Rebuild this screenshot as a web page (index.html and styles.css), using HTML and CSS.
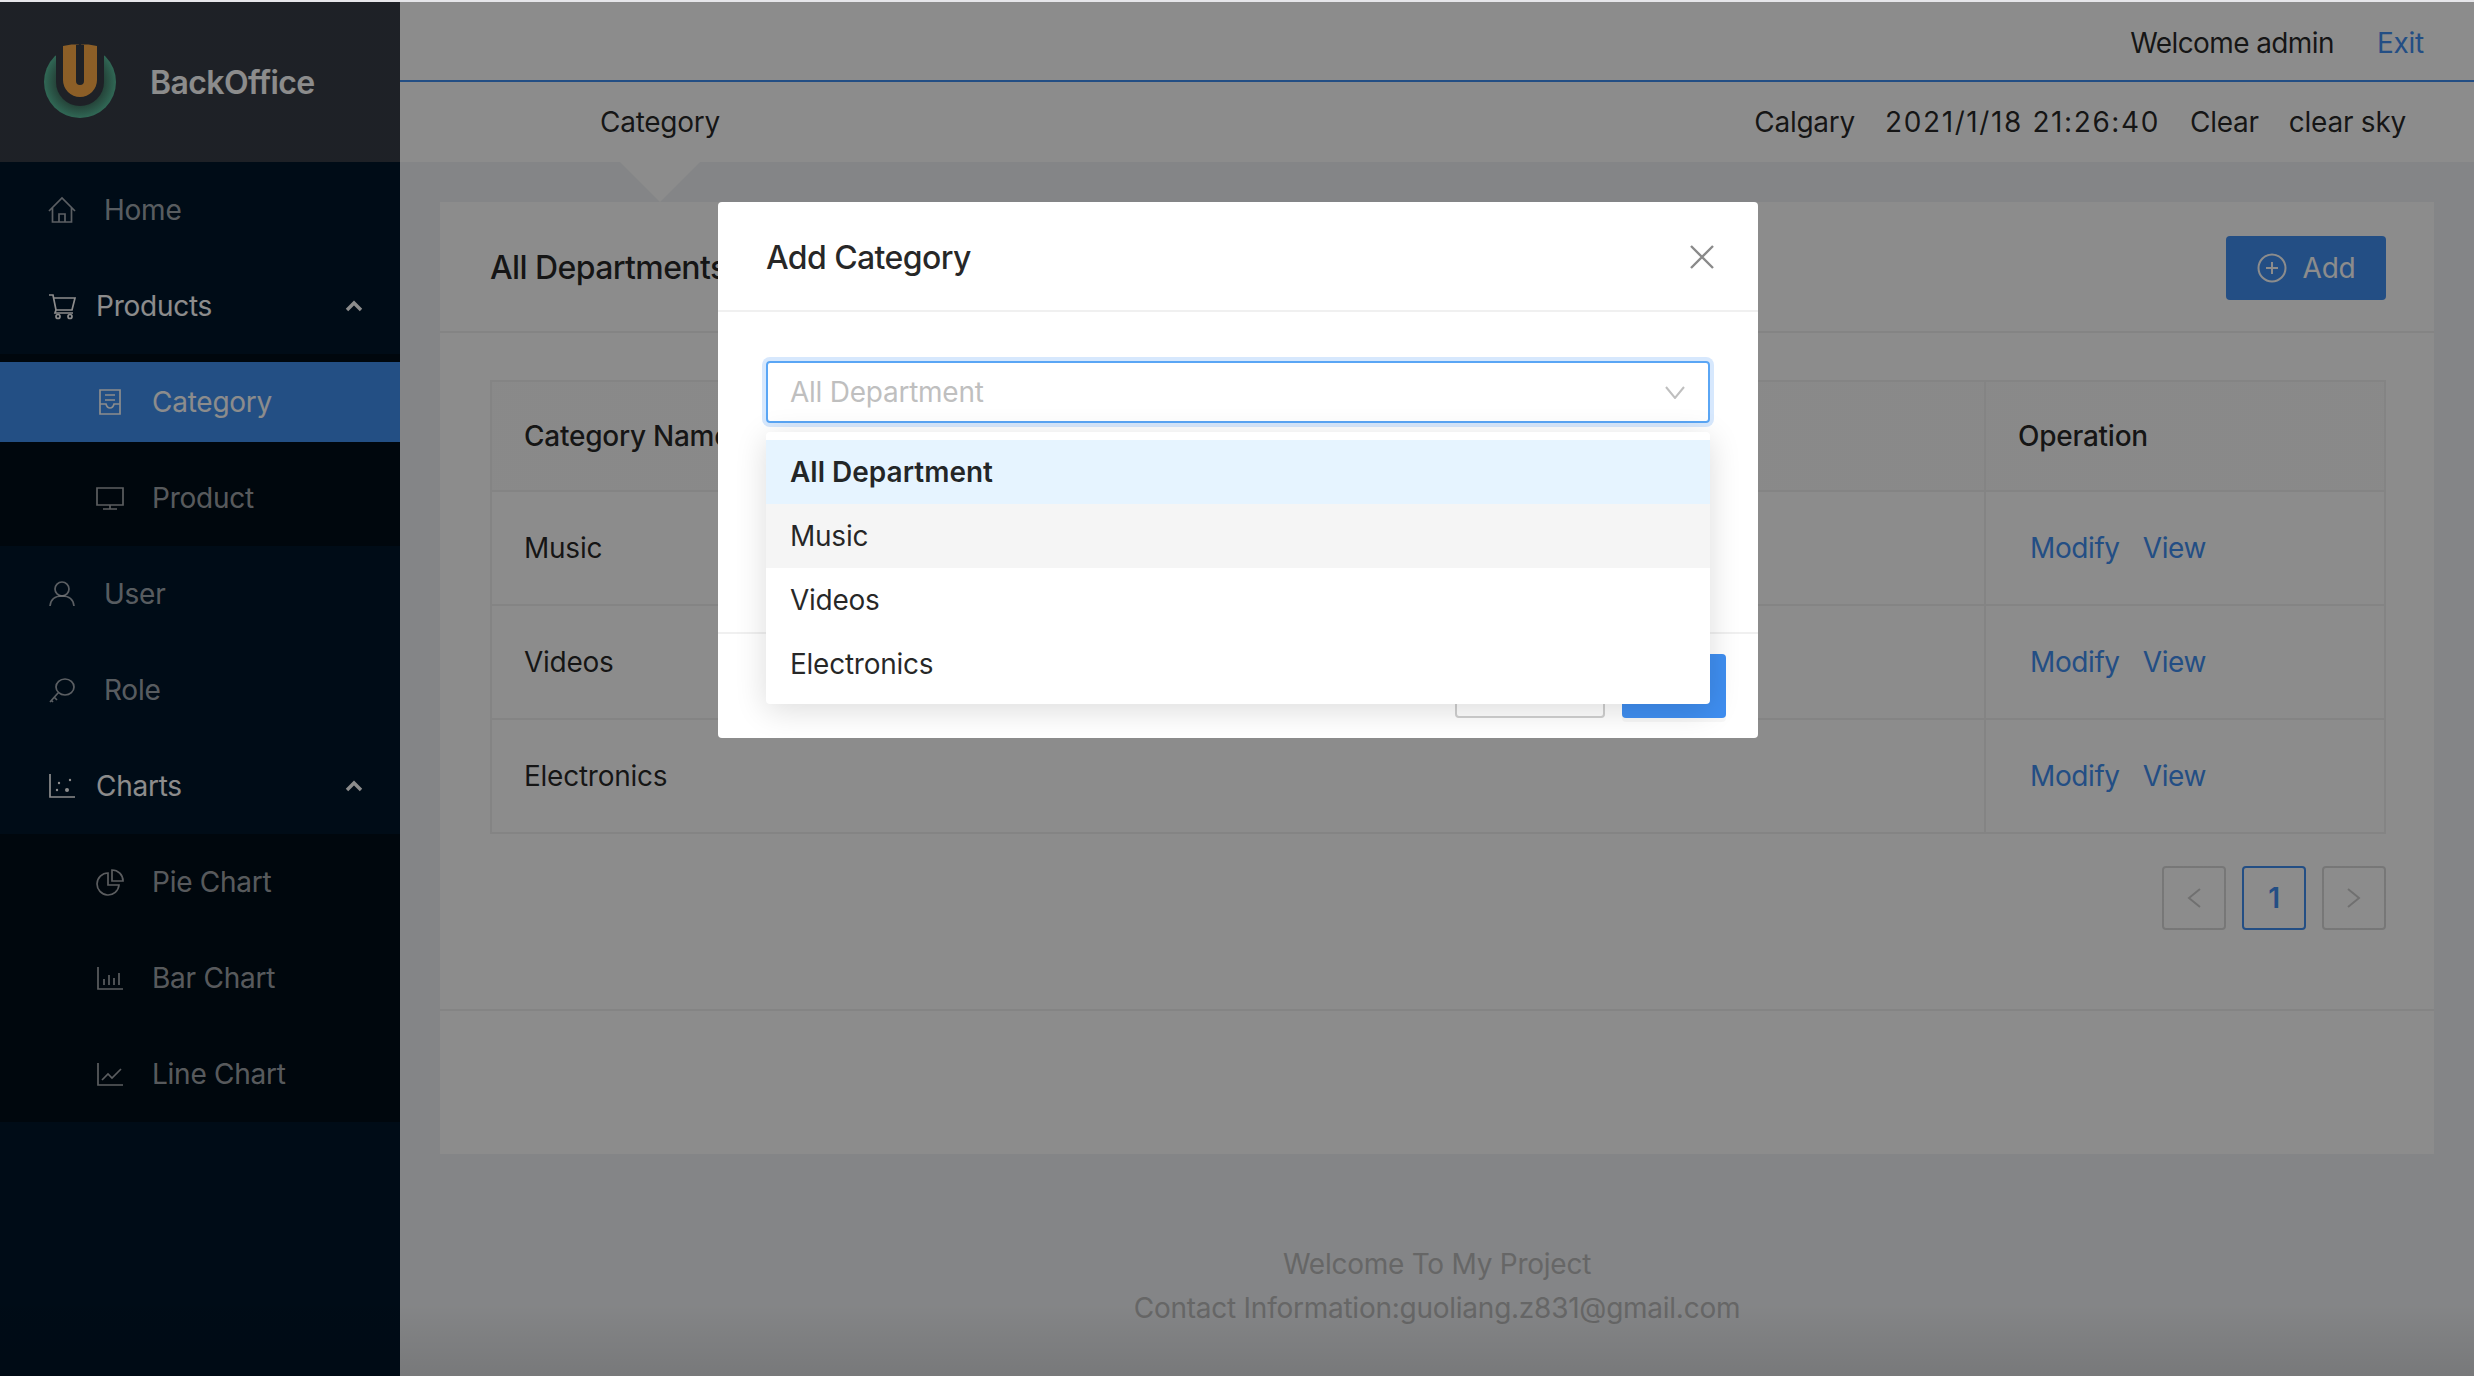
FILE: index.html
```html
<!DOCTYPE html>
<html>
<head>
  <title>BackOffice</title>
  <link rel="stylesheet" href="styles.css">
</head>
<body>
  <div class="page">
    <div class="sidebar">
      <div class="logo">
        <svg class="logo-mark" width="72" height="72" viewBox="0 0 72 72">
          <defs>
            <radialGradient id="ring" cx="50%" cy="50%" r="50%">
              <stop offset="60%" stop-color="#3f6f5f"/>
              <stop offset="100%" stop-color="#58bd9b"/>
            </radialGradient>
          </defs>
          <circle cx="36" cy="36" r="36" fill="url(#ring)"/>
          <path d="M12 -4H60V36A24 24 0 0 1 12 36Z" fill="#363c46"/>
          <path d="M19 0Q36 -4 53 0V34A17 17 0 0 1 19 34ZM32 -2V35A4 4 0 0 0 40 35V-2Z" fill="#ffac47" fill-rule="evenodd"/>
        </svg>
        <span class="logo-title">BackOffice</span>
      </div>
      <div class="menu">
        <div class="item">
          <svg class="ico" viewBox="0 0 28 28"><path d="M1 15 14 2l13 13M4.500 12v14h19V12M11 26v-8h6v8"/></svg>
          <span class="label">Home</span>
        </div>
        <div class="item open">
          <svg class="ico" viewBox="0 0 28 28"><path d="M1 3h4l3 15h16l3-12H6M8 18l-1 3h18"/><circle cx="10" cy="24.500" r="2"/><circle cx="22" cy="24.500" r="2"/></svg>
          <span class="label tight">Products</span>
          <svg class="chev" viewBox="0 0 18 12"><path d="M2 10 9 3l7 7"/></svg>
        </div>
        <div class="sub">
          <div class="item selected">
            <svg class="ico" viewBox="0 0 28 28"><path d="M4 2h20v24H4zM9 7h10M9 12h10M4 16h6q1 4 4 4t4-4h6"/></svg>
            <span class="label">Category</span>
          </div>
          <div class="item">
            <svg class="ico" viewBox="0 0 28 28"><path d="M1 4h26v17H1zM14 21v4M7 25h14"/></svg>
            <span class="label">Product</span>
          </div>
        </div>
        <div class="item">
          <svg class="ico" viewBox="0 0 28 28"><circle cx="14" cy="9" r="7"/><path d="M2 26q1-10 12-10t12 10"/></svg>
          <span class="label">User</span>
        </div>
        <div class="item">
          <svg class="ico" viewBox="0 0 28 28"><ellipse cx="17" cy="11" rx="9" ry="8"/><path d="M10 17 2 26M6 21l3 3M3 24l2 2"/></svg>
          <span class="label">Role</span>
        </div>
        <div class="item open">
          <svg class="ico" viewBox="0 0 28 28"><path d="M2 2v23h25"/><circle cx="9" cy="18" r="1.200" class="dot"/><circle cx="11" cy="11" r="1.200" class="dot"/><circle cx="19" cy="18" r="2" class="dot"/><circle cx="22" cy="8" r="1.200" class="dot"/></svg>
          <span class="label tight">Charts</span>
          <svg class="chev" viewBox="0 0 18 12"><path d="M2 10 9 3l7 7"/></svg>
        </div>
        <div class="sub">
          <div class="item">
            <svg class="ico" viewBox="0 0 28 28"><path d="M12 5a11 11 0 1 0 11 12H12zM16 2v11h11A11 11 0 0 0 16 2z"/></svg>
            <span class="label">Pie Chart</span>
          </div>
          <div class="item">
            <svg class="ico" viewBox="0 0 28 28"><path d="M2 3v22h25M8 21v-6M13 21V11M18 21v-7M23 21V9"/></svg>
            <span class="label">Bar Chart</span>
          </div>
          <div class="item">
            <svg class="ico" viewBox="0 0 28 28"><path d="M2 3v22h25M6 20l6-6 4 4 9-9"/></svg>
            <span class="label">Line Chart</span>
          </div>
        </div>
      </div>
    </div>

    <div class="main">
      <div class="header">
        <div class="header-top">
          <span class="welcome">Welcome admin</span>
          <a class="link">Exit</a>
        </div>
        <div class="header-bottom">
          <div class="page-title">Category</div>
          <div class="weather">
            <span>Calgary</span>
            <span class="date">2021/1/18 21:26:40</span>
            <span>Clear</span>
            <span>clear sky</span>
          </div>
        </div>
      </div>

      <div class="content">
        <div class="card">
          <div class="card-head">
            <span class="card-title">All Departments</span>
            <button class="add-button">
              <svg width="30" height="30" viewBox="0 0 30 30"><circle cx="15" cy="15" r="13.500"/><path d="M15 9v12M9 15h12"/></svg>
              Add
            </button>
          </div>
          <div class="card-body">
            <table class="table">
              <tr>
                <th>Category Name</th>
                <th class="op-col">Operation</th>
              </tr>
              <tr>
                <td>Music</td>
                <td class="op-col"><a class="link op">Modify</a><a class="link op">View</a></td>
              </tr>
              <tr>
                <td>Videos</td>
                <td class="op-col"><a class="link op">Modify</a><a class="link op">View</a></td>
              </tr>
              <tr>
                <td>Electronics</td>
                <td class="op-col"><a class="link op">Modify</a><a class="link op">View</a></td>
              </tr>
            </table>
            <div class="pager">
              <div class="pager-item"><svg width="16" height="22" viewBox="0 0 16 22"><path d="M14 2 3 11l11 9"/></svg></div>
              <div class="pager-item active">1</div>
              <div class="pager-item"><svg width="16" height="22" viewBox="0 0 16 22"><path d="M2 2l11 9-11 9"/></svg></div>
            </div>
          </div>
        </div>
      </div>

      <div class="footer">
        <div>Welcome To My Project</div>
        <div>Contact Information:guoliang.z831@gmail.com</div>
      </div>
    </div>

    <div class="mask"></div>

    <div class="modal">
      <div class="modal-head">
        <span class="modal-title">Add Category</span>
        <svg class="modal-close" width="24" height="24" viewBox="0 0 24 24"><path d="M1 1l22 22M23 1 1 23"/></svg>
      </div>
      <div class="modal-body">
        <div class="select">
          <span class="placeholder">All Department</span>
          <svg class="select-arrow" width="20" height="13" viewBox="0 0 20 13"><path d="M1 1l9 11 9-11"/></svg>
        </div>
      </div>
      <div class="modal-foot">
        <button class="btn">Cancel</button>
        <button class="btn btn-primary">OK</button>
      </div>
      <div class="dropdown">
        <div class="option chosen">All Department</div>
        <div class="option hovered">Music</div>
        <div class="option">Videos</div>
        <div class="option">Electronics</div>
      </div>
    </div>
  </div>
</body>
</html>
```

FILE: styles.css
```css
* {
  box-sizing: border-box;
}

html, body {
  height: 100%;
}

body {
  margin: 0;
  padding-top: 2px;
  background-color: #e6e6ea;
  font-family: Inter, "Noto Sans", sans-serif;
  font-size: 28px;
  letter-spacing: -0.25px;
  color: rgba(0, 0, 0, 0.85);
  overflow: hidden;
}

.page {
  position: relative;
  display: flex;
  height: 1374px;
}

.link {
  color: #3f8ef0;
}

/* sidebar */

.sidebar {
  width: 400px;
  flex-shrink: 0;
  background-color: #001529;
}

.logo {
  display: flex;
  align-items: center;
  height: 160px;
  padding-left: 44px;
  background-color: #363c46;
}

.logo-mark {
  overflow: visible;
}

.logo-title {
  margin-left: 34px;
  font-size: 32px;
  font-weight: 600;
  letter-spacing: -0.6px;
  color: #ffffff;
}

.menu {
  padding-top: 8px;
}

.item {
  display: flex;
  align-items: center;
  height: 80px;
  margin-bottom: 16px;
  padding-left: 48px;
  color: rgba(255, 255, 255, 0.65);
}

.item.open {
  margin-bottom: 8px;
  color: #ffffff;
}

.item.selected {
  background-color: #3f8ff0;
  color: #ffffff;
}

.ico {
  width: 28px;
  height: 28px;
  flex-shrink: 0;
  fill: none;
  stroke: currentColor;
  stroke-width: 1.7;
}

.ico .dot {
  fill: currentColor;
  stroke: none;
}

.label {
  margin-left: 28px;
}

.label.tight {
  margin-left: 20px;
}

.chev {
  width: 18px;
  height: 12px;
  margin-left: auto;
  margin-right: 37px;
  fill: none;
  stroke: currentColor;
  stroke-width: 3.4;
}

.sub {
  margin-bottom: 8px;
  padding: 8px 0;
  background-color: #000c17;
}

.sub .item {
  padding-left: 96px;
}

.sub .item:last-child {
  margin-bottom: 0;
}

/* header */

.main {
  flex: 1;
  display: flex;
  flex-direction: column;
  min-width: 0;
  background-color: #f0f2f5;
}

.header {
  background-color: #ffffff;
}

.header-top {
  display: flex;
  justify-content: flex-end;
  align-items: center;
  gap: 43px;
  height: 80px;
  padding: 4px 50px 0 0;
  border-bottom: 2px solid #3f8ef0;
}

.welcome {
  letter-spacing: -0.6px;
}

.header-bottom {
  position: relative;
  display: flex;
  align-items: center;
  height: 80px;
}

.header-bottom::after {
  content: "";
  position: absolute;
  left: 220px;
  top: 80px;
  border-top: 40px solid #ffffff;
  border-left: 40px solid transparent;
  border-right: 40px solid transparent;
}

.page-title {
  width: 520px;
  text-align: center;
}

.weather {
  display: flex;
  gap: 30px;
  margin-left: auto;
  padding-right: 68px;
}

.date {
  letter-spacing: 1.6px;
}

/* card */

.content {
  padding: 40px 40px 0;
}

.card {
  height: 952px;
  background-color: #ffffff;
}

.card-head {
  display: flex;
  justify-content: space-between;
  align-items: center;
  height: 131px;
  padding: 2px 48px 0 50px;
  border-bottom: 2px solid #f0f0f0;
}

.card-title {
  font-size: 32px;
  font-weight: 500;
  letter-spacing: -0.6px;
}

.add-button {
  display: flex;
  align-items: center;
  justify-content: center;
  gap: 16px;
  width: 160px;
  height: 64px;
  border: 0;
  border-radius: 4px;
  background-color: #3f8ef0;
  font: inherit;
  letter-spacing: inherit;
  color: #ffffff;
}

.add-button svg {
  fill: none;
  stroke: #ffffff;
  stroke-width: 2;
}

.card-body {
  height: 678px;
  padding: 47px 48px 0 50px;
  border-bottom: 2px solid #f0f0f0;
}

.table {
  width: 100%;
  border-collapse: separate;
  border-spacing: 0;
  border: 2px solid #f0f0f0;
  border-bottom: 0;
  background-color: #ffffff;
}

.table th {
  height: 110px;
  padding: 0 32px;
  text-align: left;
  font-weight: 500;
  background-color: #fafafa;
  border-bottom: 2px solid #f0f0f0;
}

.table td {
  height: 114px;
  padding: 0 32px;
  border-bottom: 2px solid #f0f0f0;
}

.table .op-col {
  width: 400px;
  border-left: 2px solid #f0f0f0;
}

.op {
  margin-left: 12px;
  margin-right: 11px;
  letter-spacing: -0.4px;
}

.pager {
  display: flex;
  justify-content: flex-end;
  gap: 16px;
  margin-top: 32px;
}

.pager-item {
  display: flex;
  align-items: center;
  justify-content: center;
  width: 64px;
  height: 64px;
  border: 2px solid #d9d9d9;
  border-radius: 4px;
}

.pager-item svg {
  fill: none;
  stroke: #cccccc;
  stroke-width: 2;
}

.pager-item.active {
  border-color: #3f8ef0;
  color: #3f8ef0;
  font-weight: 600;
}

/* footer */

.footer {
  flex: 1;
  padding-top: 88px;
  text-align: center;
  line-height: 44px;
  color: #bababa;
}

/* modal */

.mask {
  position: absolute;
  top: 0;
  left: 0;
  right: 0;
  bottom: 0;
  background: linear-gradient(to top, rgba(0, 0, 0, 0.5), rgba(0, 0, 0, 0.45) 70px);
}

.modal {
  position: absolute;
  top: 200px;
  left: 718px;
  width: 1040px;
  height: 536px;
  border-radius: 4px;
  background-color: #ffffff;
}

.modal-head {
  display: flex;
  justify-content: space-between;
  align-items: center;
  height: 110px;
  padding: 2px 44px 0 48px;
  border-bottom: 2px solid #f0f0f0;
}

.modal-title {
  font-size: 32px;
  font-weight: 500;
  letter-spacing: -0.6px;
}

.modal-close {
  fill: none;
  stroke: #8a8a8a;
  stroke-width: 2.4;
}

.modal-body {
  height: 322px;
  padding: 49px 48px 0;
  border-bottom: 2px solid #f0f0f0;
}

.select {
  display: flex;
  justify-content: space-between;
  align-items: center;
  height: 62px;
  padding: 0 23px 0 22px;
  border: 2px solid #5aa6f5;
  border-radius: 4px;
  box-shadow: 0 0 0 4px #d7e8fd;
}

.placeholder {
  color: #bfbfbf;
}

.select-arrow {
  fill: none;
  stroke: #bfbfbf;
  stroke-width: 2;
}

.modal-foot {
  display: flex;
  justify-content: flex-end;
  gap: 17px;
  padding: 20px 32px 0 0;
}

.btn {
  width: 150px;
  height: 64px;
  border: 2px solid #d0d0d0;
  border-radius: 4px;
  background-color: #ffffff;
  font: inherit;
  color: rgba(0, 0, 0, 0.85);
}

.btn-primary {
  width: 104px;
  border: 0;
  background-color: #3f8ef0;
  color: #ffffff;
  box-shadow: 0 4px 0 rgba(0, 0, 0, 0.03);
}

.dropdown {
  position: absolute;
  top: 230px;
  left: 48px;
  width: 944px;
  padding: 8px 0;
  border-radius: 4px;
  background-color: #ffffff;
  box-shadow: 0 6px 32px rgba(0, 0, 0, 0.14);
}

.option {
  display: flex;
  align-items: center;
  height: 64px;
  padding: 0 24px;
}

.option.chosen {
  background-color: #e6f4ff;
  font-weight: 600;
  letter-spacing: 0;
}

.option.hovered {
  background-color: #f5f5f5;
}
```
